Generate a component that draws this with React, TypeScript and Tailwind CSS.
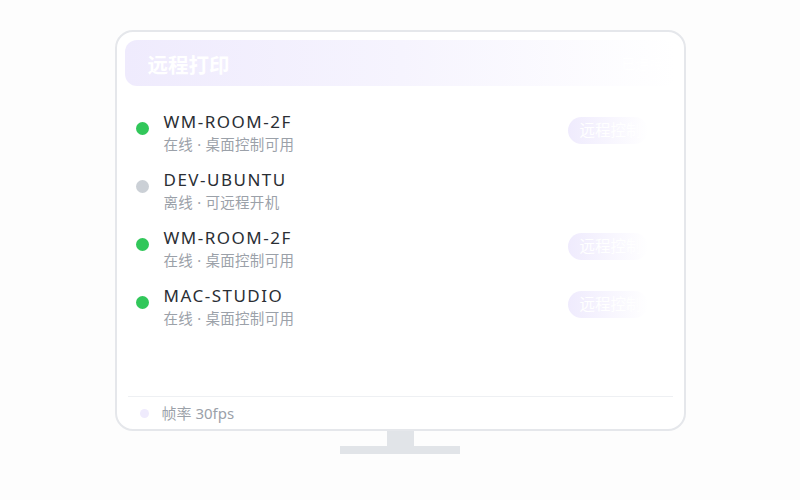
const devices = [
  { name: "WM-ROOM-2F", online: true, desc: "在线 · 桌面控制可用" },
  { name: "DEV-UBUNTU", online: false, desc: "离线 · 可远程开机" },
  { name: "WM-ROOM-2F", online: true, desc: "在线 · 桌面控制可用" },
  { name: "MAC-STUDIO", online: true, desc: "在线 · 桌面控制可用" },
];

const font = { fontFamily: '"Noto Sans", "Noto Sans CJK SC", sans-serif' };

export default function App() {
  return (
    <div className="w-[800px] h-[500px] bg-[#fdfdfd] flex flex-col items-center pt-[30px]" style={font}>
      {/* Monitor */}
      <div className="w-[571px] h-[401px] border-2 border-[#e5e7eb] rounded-[18px] bg-white flex flex-col px-2 pt-2">
        <div className="h-[46px] shrink-0 rounded-[12px] bg-gradient-to-r from-[#efebfd] via-[#f6f4fe] to-white flex items-center justify-between pl-[23px] pr-3">
          <span className="text-white text-[20.5px] font-bold leading-none mt-[4px]">远程打印</span>
          <span className="text-white text-[14px]">已连接</span>
        </div>

        <div className="mt-6 flex flex-col">
          {devices.map((d, i) => (
            <div key={i} className="h-[58px] flex items-start pl-[11px]">
              <span
                className={`w-[13px] h-[13px] rounded-full mt-[12px] shrink-0 ${d.online ? "bg-[#31c75a]" : "bg-[#cbd0d6]"}`}
              />
              <div className="ml-[15px] flex-1 min-w-0">
                <p className="text-[17px] leading-[22px] mt-[1px] text-[#2a2e34] tracking-[1.5px]">{d.name}</p>
                <p className="text-[14.5px] leading-[18px] mt-[2px] text-[#9ba1a9] tracking-[0.3px]">{d.desc}</p>
              </div>
              {d.online && (
                <button className="mt-[7px] mr-[28px] h-[27px] w-[80px] rounded-full bg-gradient-to-r from-[#efebfd] to-white/0 text-white text-[15.5px] text-left pl-[12px] shrink-0">
                  远程控制
                </button>
              )}
            </div>
          ))}
        </div>

        <div className="mt-auto mx-[3px] h-[33px] border-t border-[#eef0f3] flex items-center pl-3">
          <span className="w-[9px] h-[9px] rounded-full bg-[#efebfd]" />
          <span className="ml-[13px] text-[15px] text-[#9ba1a9]">帧率 30fps</span>
        </div>
      </div>

      {/* Stand */}
      <div className="w-[27px] h-[15px] bg-[#e1e4e8]" />
      <div className="w-[120px] h-[8px] bg-[#e1e4e8]" />
    </div>
  );
}
